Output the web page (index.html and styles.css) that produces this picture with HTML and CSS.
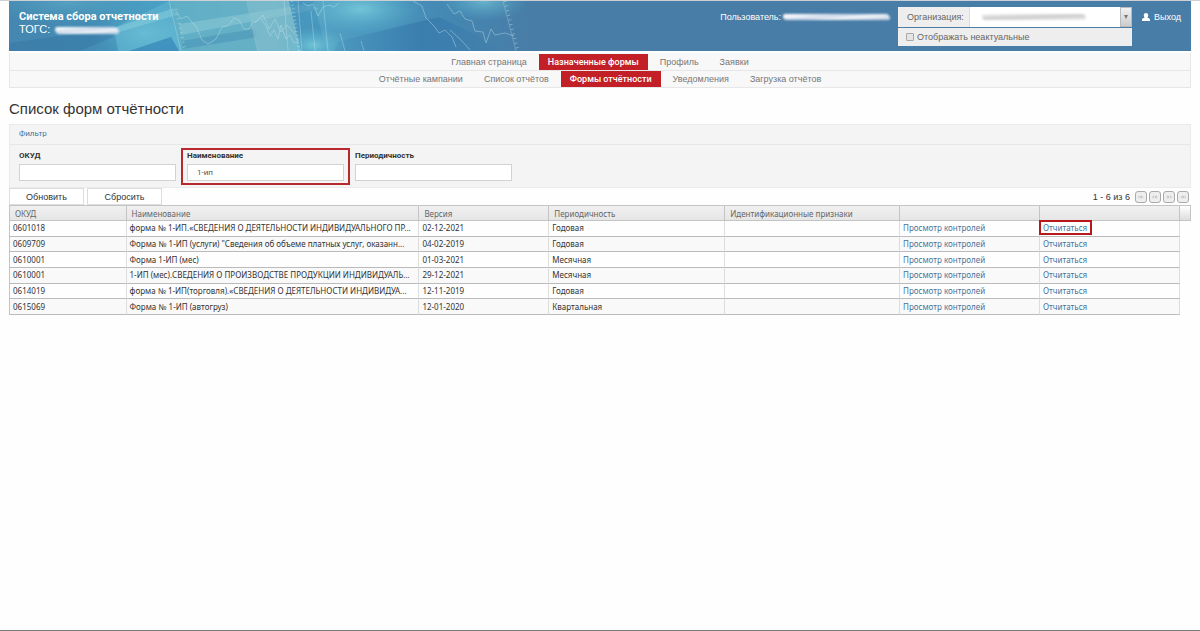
FILE: index.html
```html
<!DOCTYPE html>
<html lang="ru">
<head>
    <meta charset="UTF-8">
    <meta name="viewport" content="width=device-width, initial-scale=1.0">
    <title>Система сбора отчетности</title>
    <link rel="stylesheet" href="styles.css">
</head>
<body>
    <div class="container">
        <header class="header">
            <svg class="header-art" viewBox="0 0 520 50" aria-hidden="true">
                <defs>
                    <linearGradient id="base" x1="0" x2="1" y1="0" y2="0">
                        <stop offset="0" stop-color="#4587b0"/>
                        <stop offset="0.15" stop-color="#438bb4"/>
                        <stop offset="0.32" stop-color="#4aa5c8"/>
                        <stop offset="0.5" stop-color="#5ba9c6"/>
                        <stop offset="0.7" stop-color="#4a97bf"/>
                        <stop offset="0.85" stop-color="#4487b2"/>
                        <stop offset="1" stop-color="#487da7"/>
                    </linearGradient>
                    <radialGradient id="glow">
                        <stop offset="0" stop-color="#7bd0dc" stop-opacity="0.8"/>
                        <stop offset="1" stop-color="#5bb5d0" stop-opacity="0"/>
                    </radialGradient>
                    <linearGradient id="beam" x1="0" x2="1" y1="1" y2="0">
                        <stop offset="0" stop-color="#6ccbe0" stop-opacity="0.7"/>
                        <stop offset="1" stop-color="#a5dfe6" stop-opacity="0.2"/>
                    </linearGradient>
                    <linearGradient id="shade" x1="0" x2="1" y1="0" y2="0">
                        <stop offset="0" stop-color="#2e6da4" stop-opacity="0.1"/>
                        <stop offset="0.5" stop-color="#2868a2" stop-opacity="0.4"/>
                        <stop offset="1" stop-color="#2868a2" stop-opacity="0"/>
                    </linearGradient>
                </defs>
                <rect width="520" height="50" fill="url(#base)"/>
                <ellipse cx="60" cy="2" rx="90" ry="22" fill="url(#glow)" opacity="0.4"/>
                <ellipse cx="135" cy="32" rx="50" ry="26" fill="url(#glow)" opacity="0.5"/>
                <path d="M105 27 L160 0 L172 50 L109 50z" fill="url(#beam)" opacity="0.6"/>
                <path d="M105 27 L165 7 L168 14 L107 32z" fill="#9edfe8" opacity="0.35"/>
                <path d="M0 50 L70 50 L105 36 L100 28 L0 42z" fill="#2d6a9c" opacity="0.3"/>
                <path d="M120 50 L162 36 L170 50z" fill="#2672ad" opacity="0.5"/>
                <path d="M160 0 L237 0 L250 50 L172 50z" fill="#6fb5c4" opacity="0.6"/>
                <path d="M170 23 L300 3 L310 8 L172 34z" fill="#9bd5dc" opacity="0.4"/>
                <path d="M172 40 L245 28 L248 36 L174 48z" fill="#468fb6" opacity="0.5"/>
                <path d="M237 0 L280 0 L292 50 L248 50z" fill="#92c6cf" opacity="0.55"/>
                <path d="M280 0 L304 0 L318 50 L292 50z" fill="#3e8db9" opacity="0.6"/>
                <ellipse cx="305" cy="44" rx="34" ry="18" fill="url(#glow)"/>
                <ellipse cx="352" cy="8" rx="60" ry="25" fill="url(#glow)"/>
                <ellipse cx="475" cy="0" rx="44" ry="20" fill="url(#glow)" opacity="0.8"/>
                <path d="M330 40 L430 16 L500 50 L325 50z" fill="url(#shade)"/>
                <g fill="none" stroke="#c3e3ea" stroke-width="0.7" opacity="0.6">
                    <path d="M167 10 L172 18 L178 15 L183 21 L188 27 L193 39 L199 43 L207 38 L213 26 L219 25 L225 17 L230 19 L235 28 L240 28 L244 21 L249 20"/>
                    <path d="M252 18 L257 25 L261 35 L265 29 L269 38 L272 24 L277 38 L281 34 L285 42 L290 39"/>
                    <path d="M246 22 L254 14 L260 28 L266 18 L272 31 L278 24 L286 33"/>
                    <path d="M294 2 L299 5 L304 3 L309 15 L314 6 L320 4 L325 6 L330 2"/>
                    <path d="M404 0 L413 5 L417 17 L425 25 L430 32 L436 29 L443 36 L447 46 M441 29 L453 40 L461 49"/>
                    <path d="M438 3 L445 13 L451 10 L456 18 L463 20 L466 30 L474 31 L477 42 L482 28 L486 34 L496 32 L505 35"/>
                </g>
                <g fill="none" stroke="#c8e5ec" opacity="0.5">
                    <path d="M160 0 L172 50 M275 0 L279 50 M289 0 L293 50 M302 10 L306 50 M314 0 L319 50 M331 32 L336 50 M352 40 L355 50" stroke-width="0.7"/>
                    <path d="M167 8 L176 50 M496 0 L509 50" stroke-width="3" stroke-dasharray="0.8 4"/>
                    <path d="M494 0 L507 50" stroke-width="0.6"/>
                    <path d="M283 0 L290 50" stroke-width="3" stroke-dasharray="0.8 3"/>
                </g>
            </svg>
            <div class="brand">
                <div class="brand-title">Система сбора отчетности</div>
                <div class="brand-sub">ТОГС: <span class="smudge smudge-brand"></span></div>
            </div>
            <div class="user">Пользователь:<span class="smudge smudge-user"></span></div>
            <div class="org">
                <div class="org-row">
                    <label class="org-label" for="org">Организация:</label>
                    <div class="org-field">
                        <select id="org"><option></option></select>
                        <span class="smudge smudge-org"></span>
                        <span class="org-arrow"></span>
                    </div>
                </div>
                <label class="org-check"><input type="checkbox">Отображать неактуальные</label>
            </div>
            <a href="#" class="logout">
                <svg viewBox="0 0 8 8" aria-hidden="true"><path d="M4 0C5.3 0 6.2 .9 6.2 2.2C6.2 3.3 5.8 4.1 5.2 4.5L7.4 5.5C7.8 5.7 8 6.4 8 8H0C0 6.4.2 5.7.6 5.5L2.8 4.5C2.2 4.1 1.8 3.3 1.8 2.2C1.8 .9 2.7 0 4 0z" fill="#fff"/></svg>
                Выход
            </a>
        </header>

        <nav class="menu">
            <div class="menu-row">
                <a href="#">Главная страница</a>
                <a href="#" class="active">Назначенные формы</a>
                <a href="#">Профиль</a>
                <a href="#">Заявки</a>
            </div>
            <div class="menu-row">
                <a href="#">Отчётные кампании</a>
                <a href="#">Список отчётов</a>
                <a href="#" class="active">Формы отчётности</a>
                <a href="#">Уведомления</a>
                <a href="#">Загрузка отчётов</a>
            </div>
        </nav>

        <main>
            <h1>Список форм отчётности</h1>

            <form class="filter">
                <div class="filter-head"><a href="#">Фильтр</a></div>
                <div class="filter-fields">
                    <div class="field">
                        <label for="okud">ОКУД</label>
                        <input type="text" id="okud">
                    </div>
                    <div class="field marked">
                        <label for="name">Наименование</label>
                        <input type="text" id="name" value="1-ип">
                    </div>
                    <div class="field">
                        <label for="period">Периодичность</label>
                        <input type="text" id="period">
                    </div>
                </div>
            </form>

            <div class="toolbar">
                <button type="button" class="btn">Обновить</button>
                <button type="button" class="btn">Сбросить</button>
                <div class="pager">
                    <span>1 - 6 из 6</span>
                    <button type="button" aria-label="Первая"><svg viewBox="0 0 12 12"><path d="M3.5 4.5V7.5M7 4.5L5 6L7 7.5M5 6H9"/></svg></button>
                    <button type="button" aria-label="Предыдущая"><svg viewBox="0 0 12 12"><path d="M5 4.5L3 6L5 7.5M8 4.5L6 6L8 7.5M6 6H9"/></svg></button>
                    <button type="button" aria-label="Следующая"><svg viewBox="0 0 12 12"><path d="M4 4.5L6 6L4 7.5M7 4.5L9 6L7 7.5M3 6H6"/></svg></button>
                    <button type="button" aria-label="Последняя"><svg viewBox="0 0 12 12"><path d="M5 4.5L7 6L5 7.5M3 6H7M8.5 4.5V7.5"/></svg></button>
                </div>
            </div>

            <table class="grid">
                <colgroup>
                    <col class="c-okud"><col class="c-name"><col class="c-ver"><col class="c-per"><col class="c-id"><col class="c-link"><col class="c-link"><col class="c-scroll">
                </colgroup>
                <thead>
                    <tr><th>ОКУД</th><th>Наименование</th><th>Версия</th><th>Периодичность</th><th>Идентификационные признаки</th><th></th><th></th><th></th></tr>
                </thead>
                <tbody>
                    <tr><td>0601018</td><td>форма № 1-ИП.«СВЕДЕНИЯ О ДЕЯТЕЛЬНОСТИ ИНДИВИДУАЛЬНОГО ПР...</td><td>02-12-2021</td><td>Годовая</td><td></td><td><a href="#">Просмотр контролей</a></td><td><a href="#" class="marked-link">Отчитаться</a></td></tr>
                    <tr><td>0609709</td><td>Форма № 1-ИП (услуги) "Сведения об объеме платных услуг, оказанн...</td><td>04-02-2019</td><td>Годовая</td><td></td><td><a href="#">Просмотр контролей</a></td><td><a href="#">Отчитаться</a></td></tr>
                    <tr><td>0610001</td><td>Форма 1-ИП (мес)</td><td>01-03-2021</td><td>Месячная</td><td></td><td><a href="#">Просмотр контролей</a></td><td><a href="#">Отчитаться</a></td></tr>
                    <tr><td>0610001</td><td>1-ИП (мес).СВЕДЕНИЯ О ПРОИЗВОДСТВЕ ПРОДУКЦИИ ИНДИВИДУАЛЬН...</td><td>29-12-2021</td><td>Месячная</td><td></td><td><a href="#">Просмотр контролей</a></td><td><a href="#">Отчитаться</a></td></tr>
                    <tr><td>0614019</td><td>форма № 1-ИП(торговля).«СВЕДЕНИЯ О ДЕЯТЕЛЬНОСТИ ИНДИВИДУА...</td><td>12-11-2019</td><td>Годовая</td><td></td><td><a href="#">Просмотр контролей</a></td><td><a href="#">Отчитаться</a></td></tr>
                    <tr><td>0615069</td><td>Форма № 1-ИП (автогруз)</td><td>12-01-2020</td><td>Квартальная</td><td></td><td><a href="#">Просмотр контролей</a></td><td><a href="#">Отчитаться</a></td></tr>
                </tbody>
            </table>
        </main>
    </div>
    <footer class="bottom-line"></footer>
</body>
</html>
```
FILE: styles.css
```css
* {
    margin: 0;
    padding: 0;
    box-sizing: border-box;
}

body {
    min-height: 100vh;
    display: flex;
    flex-direction: column;
    background: #fefefe;
    border-top: 1px solid #cdd0d4;
    font-family: "Liberation Sans", Arial, sans-serif;
    font-size: 9px;
    color: #333;
}

a {
    color: #46739a;
    text-decoration: none;
}

input, select, button {
    font: inherit;
    color: inherit;
}

.container {
    flex: 1;
    padding: 0 9px;
}

/* header */
.header {
    position: relative;
    display: flex;
    align-items: flex-start;
    height: 50px;
    padding: 6px 10px 0;
    background: #487da7;
    color: #fff;
}

.header-art {
    position: absolute;
    left: 0;
    top: 0;
    width: 520px;
    height: 50px;
}

.brand {
    position: relative;
    flex: 1;
    padding-top: 4px;
    font-size: 11px;
    line-height: 12px;
}

.brand-title {
    font-family: Roboto, sans-serif;
    font-weight: bold;
}

.smudge {
    display: inline-block;
    border-radius: 3px 6px 2px 5px;
    background: linear-gradient(175deg, #fff 10%, #ccd8ea 45%, #f4f6fa 60%, #b9cadf 100%);
    filter: blur(1px);
}

.smudge-brand {
    width: 64px;
    height: 7px;
    margin-left: 2px;
    vertical-align: -1px;
}

.smudge-user {
    width: 107px;
    height: 6px;
    margin-left: 2px;
}

.user {
    line-height: 20px;
    margin-right: 8px;
}

.org {
    width: 234px;
    color: #666;
}

.org-row {
    display: flex;
    height: 20px;
    background: #fff;
}

.org-label {
    width: 72px;
    padding-left: 9px;
    line-height: 20px;
    background: #eee;
    border-right: 1px solid #ddd;
}

.org-field {
    position: relative;
    flex: 1;
}

.org-field select {
    width: 100%;
    height: 20px;
    border: 0;
    background: #fff;
    appearance: none;
}

.smudge-org {
    position: absolute;
    left: 12px;
    top: 7px;
    width: 104px;
    height: 6px;
    background: linear-gradient(178deg, #f4f4f4, #ccc 50%, #f0f0f0);
}

.org-arrow {
    position: absolute;
    right: 0;
    top: 0;
    width: 12px;
    height: 20px;
    border: 1px solid #bbb;
    background: linear-gradient(#f2f2f2, #ccc);
    pointer-events: none;
}

.org-arrow::after {
    content: '';
    position: absolute;
    left: 3px;
    top: 7px;
    border: 2px solid transparent;
    border-top: 4px solid #777;
    border-bottom: 0;
}

.org-check {
    display: flex;
    align-items: center;
    gap: 3px;
    height: 18px;
    margin-top: 1px;
    padding-left: 8px;
    background: #eee;
}

.org-check input {
    width: 8px;
    height: 8px;
    appearance: none;
    border: 1px solid #aaa;
    border-radius: 1px;
    background: #e4e4e4;
}

.logout {
    display: flex;
    align-items: center;
    gap: 4px;
    height: 20px;
    margin-left: 10px;
    color: #fff;
}

.logout svg {
    width: 8px;
    height: 8px;
}

/* menu */
.menu {
    margin-top: 2px;
    border: 1px solid #e7e7e7;
    border-top: 0;
    background: #f8f8f8;
}

.menu-row {
    display: flex;
    justify-content: center;
    gap: 3px;
    line-height: 16px;
    padding-top: 1px;
}

.menu-row + .menu-row {
    border-top: 1px solid #e7e7e7;
    padding-top: 0;
}

.menu a {
    padding: 0 9px;
    color: #777;
}

.menu a.active {
    background: #c22026;
    color: #fff;
    font-family: Roboto, sans-serif;
    font-weight: 500;
}

h1 {
    margin: 12px 0 6px;
    font-size: 15px;
    line-height: 18px;
    font-weight: normal;
}

/* filter */
.filter {
    border: 1px solid #eaeaea;
    background: #f4f4f4;
    font-family: Roboto, sans-serif;
    font-size: 8px;
}

.filter-head {
    height: 20px;
    padding-left: 9px;
    line-height: 18px;
    border-bottom: 1px solid #e7e7e7;
}

.filter-fields {
    display: flex;
    gap: 11px;
    padding: 5px 9px 6px;
}

.field {
    position: relative;
    width: 157px;
}

.field label {
    display: block;
    line-height: 12px;
    margin-bottom: 2px;
    font-weight: bold;
}

.field input {
    display: block;
    width: 100%;
    height: 17px;
    padding: 0 9px;
    border: 1px solid #d2d2d2;
    background: #fff;
    color: #555;
}

.marked::after {
    content: '';
    position: absolute;
    inset: -2px -6px -4px;
    border: 2px solid #b8282c;
    pointer-events: none;
}

/* toolbar */
.toolbar {
    display: flex;
    align-items: center;
    gap: 3px;
    height: 17px;
}

.btn {
    width: 75px;
    height: 17px;
    border: 1px solid #ddd;
    background: #fff;
}

.pager {
    display: flex;
    align-items: center;
    gap: 2px;
    margin-left: auto;
    padding-right: 2px;
}

.pager span {
    margin-right: 3px;
}

.pager button {
    width: 12px;
    height: 12px;
    border: 1px solid #aaa;
    border-radius: 3px;
    background: #eee;
}

.pager svg {
    display: block;
    width: 10px;
    height: 10px;
    fill: none;
    stroke: #bbb;
}

/* table */
.grid {
    width: 100%;
    height: 110px;
    table-layout: fixed;
    border-collapse: separate;
    border-spacing: 0;
    font-family: "Noto Sans", Verdana, sans-serif;
    font-size: 8px;
    line-height: 12px;
}

.c-okud { width: 9.95%; }
.c-name { width: 24.8%; }
.c-ver { width: 11%; }
.c-per { width: 14.9%; }
.c-id { width: 14.8%; }
.c-link { width: 11.85%; }
.c-scroll { width: 11px; }

.grid th {
    height: 16px;
    padding: 1px 5px 0;
    border: 1px solid #c4c4c4;
    border-left: 0;
    background: linear-gradient(#f0f0f0, #e6e6e6);
    color: #666;
    font-weight: normal;
    text-align: left;
}

.grid th:last-child {
    background: linear-gradient(#fff, #ddd);
}

.grid td {
    padding: 0 3px;
    border-right: 1px solid #ddd;
    border-bottom: 1px solid #bbb;
    overflow: hidden;
    text-overflow: ellipsis;
    white-space: nowrap;
}

.grid th:first-child, .grid td:first-child {
    border-left: 1px solid #c4c4c4;
}

.grid tbody tr:nth-child(even) td {
    background: #f9f9f9;
}

.grid td:last-child {
    overflow: visible;
}

.marked-link {
    position: relative;
}

.marked-link::after {
    content: '';
    position: absolute;
    inset: -2px -5px -2px -4px;
    border: 2px solid #b8181c;
}

.bottom-line {
    height: 1px;
    background: #777;
}
```
